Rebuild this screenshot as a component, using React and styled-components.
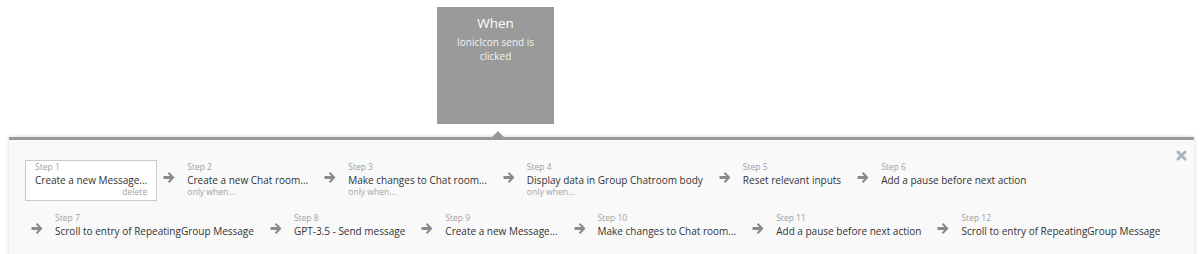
import React from "react";
import styled, { createGlobalStyle } from "styled-components";

const steps = [
  { title: "Create a new Message...", note: "delete", selected: true },
  { title: "Create a new Chat room...", note: "only when..." },
  { title: "Make changes to Chat room...", note: "only when..." },
  { title: "Display data in Group Chatroom body", note: "only when..." },
  { title: "Reset relevant inputs" },
  { title: "Add a pause before next action" },
  { title: "Scroll to entry of RepeatingGroup Message" },
  { title: "GPT-3.5 - Send message" },
  { title: "Create a new Message..." },
  { title: "Make changes to Chat room..." },
  { title: "Add a pause before next action" },
  { title: "Scroll to entry of RepeatingGroup Message" },
];

const GlobalStyle = createGlobalStyle`
  html, body {
    margin: 0;
    padding: 0;
    background: #ffffff;
    font-family: "Open Sans", "Liberation Sans", sans-serif;
  }
`;

const Editor = styled.div`
  width: 1200px;
  height: 254px;
  overflow: hidden;
  padding-top: 7px;
  box-sizing: border-box;
`;

const EventBox = styled.div`
  margin-left: 437px;
  width: 117px;
  height: 117px;
  background: #9a9a9a;
  color: #ffffff;
  text-align: center;
  box-sizing: border-box;
  padding: 6px 8px 0;
  h3 {
    margin: 0;
    font-size: 13.5px;
    font-weight: 400;
    line-height: 20px;
  }
  p {
    margin: 3px 0 0;
    font-size: 10px;
    line-height: 13.5px;
    color: #f2f2f2;
  }
`;

const Panel = styled.div`
  position: relative;
  margin: 13px 6px 0 9px;
  min-height: 140px;
  background: #f9f9f9;
  border-top: 3px solid #999999;
  box-shadow: 0 0 4px rgba(0, 0, 0, 0.18);
  padding: 20px 8px 0 16px;
  &::before {
    position: absolute;
    content: "";
    top: -9px;
    left: 483px;
    border: 6px solid transparent;
    border-bottom-color: #999999;
    border-top: 0;
  }
`;

const Close = styled.svg`
  position: absolute;
  top: 10px;
  right: 7px;
  width: 11px;
  height: 11px;
  cursor: pointer;
`;

const Flow = styled.div`
  display: flex;
  flex-wrap: wrap;
  align-items: flex-start;
  row-gap: 10px;
`;

const StepGroup = styled.div`
  display: flex;
  align-items: flex-start;
`;

const ArrowIcon = styled.svg`
  flex: none;
  width: 12px;
  height: 11px;
  margin: 12px 2px 0 6px;
  fill: #8a8a8a;
`;

// thick right arrow between two steps
const Arrow = () => (
  <ArrowIcon viewBox="0 0 12 11">
    <path d="M0.5 4 H7.2 L4.8 1.6 L6.3 0.1 L11.5 5.5 L6.3 10.9 L4.8 9.4 L7.2 7 H0.5 Z" />
  </ArrowIcon>
);

const Step = styled.div`
  box-sizing: border-box;
  padding: 0 9px 3px;
  border: 1px solid ${({ $selected }) => ($selected ? "#c9c9c9" : "transparent")};
  background: ${({ $selected }) => ($selected ? "#ffffff" : "transparent")};
  cursor: pointer;
  white-space: nowrap;
`;

const Label = styled.div`
  font-size: 8.5px;
  line-height: 12px;
  color: #a0a0a0;
`;

const Title = styled.div`
  padding-top: 1px;
  font-size: 10px;
  line-height: 13px;
  color: #333333;
`;

const Note = styled.div`
  font-size: 8.6px;
  line-height: 10px;
  color: #a3a3a3;
  text-align: ${({ $right }) => ($right ? "right" : "left")};
`;

const StepItem = ({ step, index }) => (
  <StepGroup>
    {index > 0 && <Arrow />}
    <Step $selected={step.selected}>
      <Label>Step {index + 1}</Label>
      <Title>{step.title}</Title>
      {step.note && <Note $right={step.selected}>{step.note}</Note>}
    </Step>
  </StepGroup>
);

export default function App() {
  return (
    <Editor>
      <GlobalStyle />
      <EventBox>
        <h3>When</h3>
        <p>IonicIcon send is clicked</p>
      </EventBox>
      <Panel>
        <Close viewBox="0 0 11 11">
          <path
            d="M2 2 L9 9 M9 2 L2 9"
            stroke="#aab2ba"
            strokeWidth="3"
            strokeLinecap="round"
          />
        </Close>
        <Flow>
          {steps.map((step, i) => (
            <StepItem key={i} step={step} index={i} />
          ))}
        </Flow>
      </Panel>
    </Editor>
  );
}
